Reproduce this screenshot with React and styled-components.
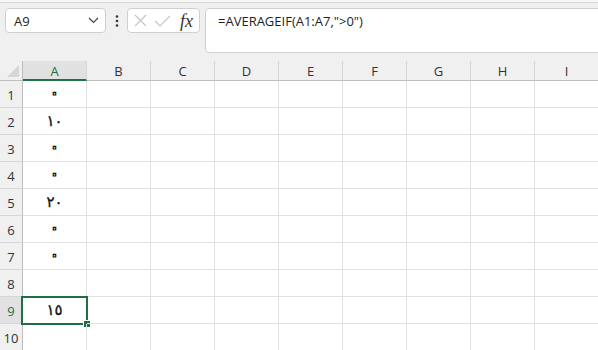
import styled, { createGlobalStyle } from "styled-components";

// ==================== GLOBAL ====================
const GlobalStyle = createGlobalStyle`
  html, body {
    margin: 0;
    padding: 0;
    background: #f0f0f0;
    overflow: hidden;
  }
  * { box-sizing: border-box; }
`;

const GREEN = "#1f6f43";
const COLS = ["A", "B", "C", "D", "E", "F", "G", "H", "I"];
const VALUES = ["٠", "١٠", "٠", "٠", "٢٠", "٠", "٠", "", "١٥", ""];
const ACTIVE_ROW = 9;

// ==================== TOOLBAR ====================
const Page = styled.div`
  width: 598px;
  height: 350px;
  overflow: hidden;
  font-family: "Open Sans", "Noto Sans", sans-serif;
`;

const TopEdge = styled.div`
  height: 3px;
  background: #f6f6f6;
  border-bottom: 1px solid #d9d9d9;
`;

const Toolbar = styled.div`
  height: 50px;
  padding: 5px 0 0 5px;
  display: flex;
  align-items: flex-start;
`;

const Box = styled.div`
  flex-shrink: 0;
  height: 25px;
  background: #fff;
  border: 1px solid #cfcfcf;
  border-radius: 4px;
  display: flex;
  align-items: center;
`;

const NameBox = styled(Box)`
  width: 101px;
  padding: 0 6px 0 8px;
  justify-content: space-between;
  font-size: 13px;
  color: #222;
`;

const Dots = styled.div`
  flex-shrink: 0;
  width: 21px;
  height: 25px;
  display: flex;
  align-items: center;
  justify-content: center;
`;

const FxBox = styled(Box)`
  width: 73px;
  padding: 0 0 0 6px;
  gap: 7px;
`;

const Fx = styled.span`
  font-family: "Liberation Serif", "DejaVu Serif", serif;
  font-style: italic;
  font-size: 18px;
  color: #333;
  margin-left: 2px;
  line-height: 1;
`;

const FormulaBar = styled.div`
  flex-shrink: 0;
  margin-left: 5px;
  width: 420px;
  height: 45px;
  background: #fff;
  border: 1px solid #cfcfcf;
  border-radius: 4px 0 0 4px;
  padding: 3px 0 0 12px;
  font-size: 13px;
  color: #1e1e1e;
`;

// ==================== SHEET ====================
const Sheet = styled.div`
  margin-top: 8px;
  display: grid;
  grid-template-columns: 23px repeat(9, 64px);
  grid-auto-rows: 27px;
  grid-template-rows: 20px;
  background: #fff;
`;

const Corner = styled.div`
  background: #f0f0f0;
  border-right: 1px solid #bdbdbd;
  border-bottom: 1px solid #bdbdbd;
  position: relative;
  &::after {
    content: "";
    position: absolute;
    right: 3px;
    bottom: 3px;
    width: 0;
    height: 0;
    border-left: 12px solid transparent;
    border-bottom: 12px solid #d6d6d6;
  }
`;

const ColHead = styled.div`
  background: ${(p) => (p.$active ? "#e1e1e1" : "#f0f0f0")};
  color: ${(p) => (p.$active ? GREEN : "#333")};
  border-right: 1px solid #d6d6d6;
  border-bottom: ${(p) => (p.$active ? `2px solid ${GREEN}` : "1px solid #bdbdbd")};
  font-size: 13px;
  display: flex;
  align-items: center;
  justify-content: center;
  padding-top: ${(p) => (p.$active ? "1px" : "0")};
`;

const RowHead = styled.div`
  background: ${(p) => (p.$active ? "#e1e1e1" : "#f0f0f0")};
  color: ${(p) => (p.$active ? GREEN : "#333")};
  border-right: 1px solid #bdbdbd;
  border-bottom: 1px solid #d6d6d6;
  font-size: 13px;
  display: flex;
  align-items: flex-end;
  justify-content: center;
  padding-bottom: 3px;
`;

const Cell = styled.div`
  position: relative;
  border-right: 1px solid #e1e1e1;
  border-bottom: 1px solid #e1e1e1;
  display: flex;
  align-items: center;
  justify-content: center;
`;

// zero is drawn hollow, like the sheet font does
const Value = styled.span`
  font-family: "DejaVu Sans", sans-serif;
  font-size: ${(p) => (p.$zero ? "22px" : "15px")};
  line-height: 1;
  color: ${(p) => (p.$zero ? "transparent" : "#111")};
  -webkit-text-stroke: ${(p) => (p.$zero ? "1.2px #111" : "0.3px #111")};
  margin-top: ${(p) => (p.$zero ? "-2px" : "0")};
`;

const Selection = styled.div`
  position: absolute;
  top: -1px;
  left: -2px;
  right: -2px;
  bottom: -2px;
  border: 2px solid ${GREEN};
  pointer-events: none;
`;

const Handle = styled.div`
  position: absolute;
  right: -5px;
  bottom: -5px;
  width: 8px;
  height: 8px;
  background: ${GREEN};
  border: 1px solid #fff;
`;

// ==================== ICONS ====================
const Chevron = () => (
  <svg width="11" height="7" viewBox="0 0 11 7">
    <path d="M1 1l4.5 4.5L10 1" fill="none" stroke="#444" strokeWidth="1.2" />
  </svg>
);

const VDots = () => (
  <svg width="4" height="12" viewBox="0 0 4 12">
    <circle cx="2" cy="1.5" r="1.3" fill="#333" />
    <circle cx="2" cy="6" r="1.3" fill="#333" />
    <circle cx="2" cy="10.5" r="1.3" fill="#333" />
  </svg>
);

const Cross = () => (
  <svg width="13" height="13" viewBox="0 0 13 13">
    <path d="M1 1l11 11M12 1L1 12" stroke="#c4c4c4" strokeWidth="1.1" fill="none" />
  </svg>
);

const Check = () => (
  <svg width="17" height="12" viewBox="0 0 17 12">
    <path d="M1 6l5 5L16 1" stroke="#c4c4c4" strokeWidth="1.1" fill="none" />
  </svg>
);

// ==================== MAIN ====================
const App = () => {
  return (
    <Page>
      <GlobalStyle />
      <TopEdge />
      <Toolbar>
        <NameBox>
          <span>A9</span>
          <Chevron />
        </NameBox>
        <Dots>
          <VDots />
        </Dots>
        <FxBox>
          <Cross />
          <Check />
          <Fx>fx</Fx>
        </FxBox>
        <FormulaBar>=AVERAGEIF(A1:A7,"&gt;0")</FormulaBar>
      </Toolbar>

      <Sheet>
        <Corner />
        {COLS.map((c) => (
          <ColHead key={c} $active={c === "A"}>
            {c}
          </ColHead>
        ))}
        {VALUES.map((v, i) => {
          const row = i + 1;
          const active = row === ACTIVE_ROW;
          return [
            <RowHead key={`h${row}`} $active={active}>
              {row}
            </RowHead>,
            ...COLS.map((c) => (
              <Cell key={`${c}${row}`}>
                {c === "A" && v && <Value $zero={v === "٠"}>{v}</Value>}
                {active && c === "A" && (
                  <Selection>
                    <Handle />
                  </Selection>
                )}
              </Cell>
            )),
          ];
        })}
      </Sheet>
    </Page>
  );
};

export default App;
